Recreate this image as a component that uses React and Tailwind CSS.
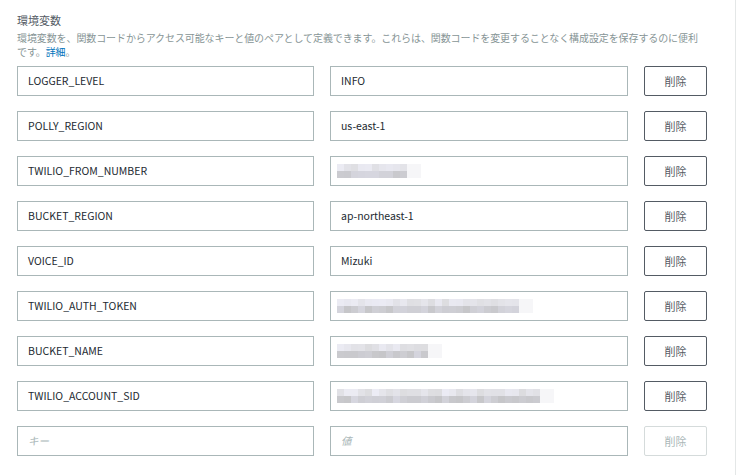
import React from "react";

const rows = [
  { k: "LOGGER_LEVEL", v: "INFO" },
  { k: "POLLY_REGION", v: "us-east-1" },
  { k: "TWILIO_FROM_NUMBER", m: 12, seed: 3 },
  { k: "BUCKET_REGION", v: "ap-northeast-1" },
  { k: "VOICE_ID", v: "Mizuki" },
  { k: "TWILIO_AUTH_TOKEN", m: 28, seed: 7 },
  { k: "BUCKET_NAME", m: 15, seed: 11 },
  { k: "TWILIO_ACCOUNT_SID", m: 31, seed: 5 },
];

function shade(i, r, seed) {
  const x = Math.sin((i + 1) * 12.9898 + (r + 1) * 78.233 + seed * 3.7) * 43758.5453;
  const f = x - Math.floor(x);
  const base = r === 0 ? 228 : 206;
  const g = Math.round(base + f * 22 - 8);
  const tint = Math.round(f * 6);
  return `rgb(${g - tint},${g - tint},${g + 3})`;
}

function Mosaic({ n, seed }) {
  const rowsM = [0, 1];
  return (
    <div className="flex flex-col blur-[0.4px]">
      {rowsM.map((r) => (
        <div key={r} className="flex">
          {Array.from({ length: n }).map((_, i) => (
            <div
              key={i}
              className="w-[7px] h-[7px]"
              style={{
                background:
                  i >= n - 2 ? "rgb(246,246,248)" : shade(i, r, seed),
              }}
            />
          ))}
        </div>
      ))}
    </div>
  );
}

const font = {
  fontFamily: '"Noto Sans CJK JP", "Noto Sans", sans-serif',
};

export default function App() {
  return (
    <div className="w-[736px] h-[475px] bg-white border-r border-[#e4e7e7]" style={font}>
      <div className="pl-[17px] pt-[12px]">
        <div className="text-[11px] leading-[16px] text-[#545b64]">環境変数</div>
        <div className="mt-[3px] text-[10px] leading-[14px] text-[#879596] tracking-[-0.1px]">
          環境変数を、関数コードからアクセス可能なキーと値のペアとして定義できます。これらは、関数コードを変更することなく構成設定を保存するのに便利
          <br />
          です。<span className="text-[#0073bb]">詳細</span>。
        </div>
        <div className="mt-[7px] flex flex-col gap-[15px]">
          {rows.map((r) => (
            <div key={r.k} className="flex items-center">
              <div className="w-[297px] h-[30px] border border-[#aab7b8] flex items-center pl-[10px] text-[10.5px] text-[#232a31]">
                {r.k}
              </div>
              <div className="ml-[16px] w-[298px] h-[30px] border border-[#aab7b8] flex items-center pl-[6px] text-[10.5px] text-[#232a31]">
                {r.v ? (
                  <span className="pl-[4px]">{r.v}</span>
                ) : (
                  <Mosaic n={r.m} seed={r.seed} />
                )}
              </div>
              <div className="ml-[16px] w-[63px] h-[30px] border border-[#545b64] rounded-[2px] flex items-center justify-center text-[11px] text-[#545b64]">
                削除
              </div>
            </div>
          ))}
          <div className="flex items-center">
            <div className="w-[297px] h-[30px] border border-[#aab7b8] flex items-center pl-[10px] text-[10.5px] text-[#aab7b8] italic">
              キー
            </div>
            <div className="ml-[16px] w-[298px] h-[30px] border border-[#aab7b8] flex items-center pl-[10px] text-[10.5px] text-[#aab7b8] italic">
              値
            </div>
            <div className="ml-[16px] w-[63px] h-[30px] border border-[#d5dbdb] rounded-[2px] flex items-center justify-center text-[11px] text-[#aab7b8]">
              削除
            </div>
          </div>
        </div>
      </div>
    </div>
  );
}
